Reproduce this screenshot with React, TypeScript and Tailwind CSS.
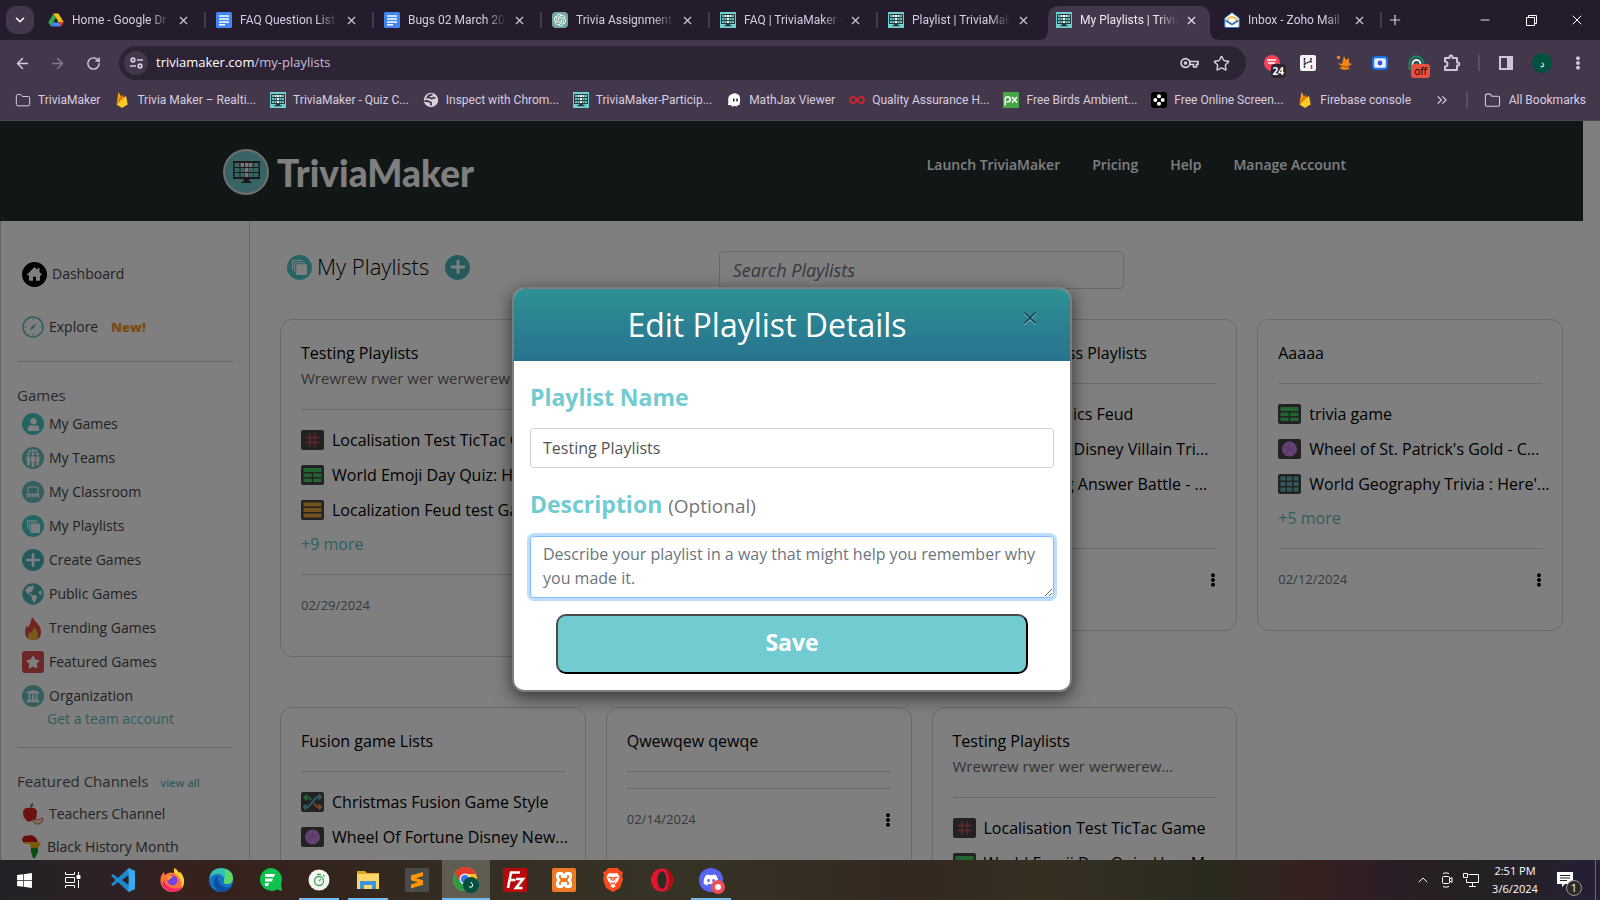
import React from 'react';
import {
  ArrowLeft, ArrowRight, RotateCw, X, Plus, Minus, ChevronDown, ChevronUp, ChevronsRight,
  Folder, Star,
} from 'lucide-react';
import { FaEllipsisV, FaUser, FaStar, FaUniversity, FaDiscord, FaWindows, FaGlobeAmericas } from 'react-icons/fa';
import { SiOpenai } from 'react-icons/si';

/* ---------- small logos ---------- */

const TriviaIcon = ({ size = 16 }: { size?: number }) => (
  <svg width={size} height={size} viewBox="0 0 16 16">
    <rect width="16" height="16" fill="#6fcfd0" />
    <rect x="1" y="2" width="14" height="10" fill="#2c3a3c" />
    <path d="M6 12h4v1h1.500v1.200h-7V13H6z" fill="#2c3a3c" />
    <path d="M2 3h2v2H2zM12 3h2v2h-2zM2 6h2v2H2zM4.500 6h2v2h-2zM9.500 6h2v2h-2zM12 6h2v2h-2zM2 9h2v2H2zM4.500 9h2v2h-2zM9.500 9h2v2h-2zM12 9h2v2h-2z" fill="#62c4c6" />
    <path d="M4.500 3h2v2h-2zM7 3h2v2H7zM9.500 3h2v2h-2zM7 6h2v2H7zM7 9h2v2H7z" fill="#eefcfc" />
  </svg>
);

const DriveIcon = () => (
  <svg width="16" height="16" viewBox="0 0 16 16">
    <path d="M5.500 1.500h5L8 6z" fill="#188038" />
    <path d="M5.500 1.500L8 6 3 14.500.3 10.200z" fill="#34a853" />
    <path d="M10.500 1.500l5.200 8.700h-5.300L5.500 1.500z" fill="#fbbc04" />
    <path d="M8 6l2.400 4.200h-5z" fill="#241b2d" />
    <path d="M5.400 10.200h5.200L13 14.500H3z" fill="#4285f4" />
    <path d="M10.400 10.200h5.300L13 14.500z" fill="#ea4335" />
  </svg>
);

const DocsIcon = () => (
  <svg width="16" height="16" viewBox="0 0 16 16">
    <rect width="16" height="16" rx="1.500" fill="#4285f4" />
    <path d="M3 3.200h10v1.600H3zM3 6.200h10v1.600H3zM3 9.200h10v1.600H3zM3 12h6v1.500H3z" fill="#fff" />
  </svg>
);

const GptIcon = () => (
  <span className="flex h-4 w-4 items-center justify-center rounded-sm bg-[#74aa9c] text-white">
    <SiOpenai size={12} />
  </span>
);

const ZohoIcon = () => (
  <svg width="16" height="16" viewBox="0 0 16 16">
    <path d="M.8 6L8 .6 15.200 6v8.300q0 1.200-1.200 1.200H2Q.8 15.500.8 14.300z" fill="#fff" stroke="#2e74c9" strokeWidth="1" />
    <path d="M3.500 7Q8 2.800 12.500 7v2L8 12 3.500 9z" fill="#fff" stroke="#f0a820" strokeWidth="1.400" />
    <path d="M1.500 8.500L8 12.500l6.500-4" fill="none" stroke="#2e74c9" strokeWidth="1.500" />
  </svg>
);

const FirebaseIcon = () => (
  <svg width="16" height="16" viewBox="0 0 16 16">
    <path d="M2.500 12.500L4.300.8q.2-.6.6 0L7 4.500z" fill="#ffa000" />
    <path d="M2.500 12.500L8.200 3q.3-.4.6 0l1.500 3z" fill="#f57c00" />
    <path d="M2.500 12.500l9-8.300q.6-.4.700.200l1.500 8.100-5 3q-.7.400-1.400 0z" fill="#ffca28" />
  </svg>
);

const GlobeIcon = () => (
  <svg width="16" height="16" viewBox="0 0 16 16">
    <circle cx="8" cy="8" r="7.200" fill="#d8d2dc" />
    <path d="M9.500 2.500Q5 3 4.500 5.500q2.500-.5 3.500 1 2 .5 2.500-1l2 .5M1.500 9h3q1.500 1 3.500 1.500v3" fill="none" stroke="#43384b" strokeWidth="1.800" />
  </svg>
);

const GhostIcon = () => (
  <svg width="14" height="14" viewBox="0 0 14 14">
    <path d="M3 2Q8-1.500 12 2q2 3 .5 10l-2 .3-1 1.500-2-1-2 1-1.500-1.600L1 12Q1.500 9 1.200 7 1 3.500 3 2z" fill="#fff" />
    <path d="M6.800 5.500v3M10 5.500v3" stroke="#222" strokeWidth="1.500" />
  </svg>
);

const InfinityIcon = () => (
  <svg width="16" height="16" viewBox="0 0 16 16" fill="none" stroke="#d8232f" strokeWidth="1.800">
    <path d="M8 8C6.500 5.500 5.500 4.800 4.200 4.800a3.200 3.200 0 000 6.400C5.500 11.200 6.500 10.500 8 8s2.500-3.200 3.800-3.200a3.200 3.200 0 010 6.400C10.500 11.200 9.500 10.500 8 8z" />
  </svg>
);

const PxIcon = () => (
  <svg width="16" height="16" viewBox="0 0 16 16">
    <rect width="16" height="16" fill="#47a447" />
    <g fill="none" stroke="#fff" strokeWidth="1.500">
      <path d="M2.200 13.500V7.300a2.500 2.500 0 112.500 2.500H3.500M9 5l5 5.500M14 5l-5 5.500" />
    </g>
  </svg>
);

const DotsIcon = () => (
  <svg width="16" height="16" viewBox="0 0 16 16">
    <rect width="16" height="16" rx="3" fill="#000" />
    <g fill="#fff">
      <circle cx="8" cy="4.300" r="2" /><circle cx="8" cy="11.700" r="2" />
      <circle cx="4.300" cy="8" r="2" /><circle cx="11.700" cy="8" r="2" />
    </g>
  </svg>
);

/* ---------- browser chrome ---------- */

const tabs = [
  { icon: <DriveIcon />, title: 'Home - Google Dr' },
  { icon: <DocsIcon />, title: 'FAQ Question List' },
  { icon: <DocsIcon />, title: 'Bugs 02 March 202' },
  { icon: <GptIcon />, title: 'Trivia Assignment (' },
  { icon: <TriviaIcon />, title: 'FAQ | TriviaMaker -' },
  { icon: <TriviaIcon />, title: 'Playlist | TriviaMak' },
  { icon: <TriviaIcon />, title: 'My Playlists | Trivia', active: true },
  { icon: <ZohoIcon />, title: 'Inbox - Zoho Mail' },
];

const bookmarks = [
  { icon: <Folder size={17} strokeWidth={1.500} />, title: 'TriviaMaker' },
  { icon: <FirebaseIcon />, title: 'Trivia Maker – Realti...' },
  { icon: <TriviaIcon />, title: 'TriviaMaker - Quiz C...' },
  { icon: <GlobeIcon />, title: 'Inspect with Chrom...' },
  { icon: <TriviaIcon />, title: 'TriviaMaker-Particip...' },
  { icon: <GhostIcon />, title: 'MathJax Viewer' },
  { icon: <InfinityIcon />, title: 'Quality Assurance H...' },
  { icon: <PxIcon />, title: 'Free Birds Ambient...' },
  { icon: <DotsIcon />, title: 'Free Online Screen...' },
  { icon: <FirebaseIcon />, title: 'Firebase console' },
];

function TabStrip() {
  return (
    <div className="flex h-10 items-stretch bg-[#241b2d] font-[Roboto] text-[#d8cde0]">
      <button aria-label="Search tabs" className="ml-[6px] mt-[6px] flex h-7 w-7 items-center justify-center rounded-[10px] bg-[#43384b] text-white">
        <ChevronDown size={14} strokeWidth={2.500} />
      </button>
      <div className="ml-[6px] flex">
        {tabs.map((tab, i) => (
          <div
            key={tab.title}
            className={`relative mt-[6px] mr-[6px] flex w-[162px] items-center pb-[6px] pl-2 ${tab.active ? 'rounded-t-[10px] bg-[#43384b] text-[#efe6f5]' : ''}`}
          >
            <span className="shrink-0">{tab.icon}</span>
            <span className="ml-2 w-[100px] overflow-hidden text-xs whitespace-nowrap [mask-image:linear-gradient(to_right,black_78px,transparent_98px)]">
              {tab.title}
            </span>
            <button aria-label="Close tab" className="ml-[5px]"><X size={13} strokeWidth={2} /></button>
            {!tab.active && i !== 5 && <span className="absolute top-[6px] -right-1 h-4 w-0.5 bg-[#453b4e]" />}
            {tab.active && (
              <>
                <svg className="absolute bottom-0 -left-[10px]" width="10" height="10"><path d="M10 0v10H0Q10 10 10 0z" fill="#43384b" /></svg>
                <svg className="absolute bottom-0 -right-[10px]" width="10" height="10"><path d="M0 0v10h10Q0 10 0 0z" fill="#43384b" /></svg>
              </>
            )}
          </div>
        ))}
      </div>
      <button aria-label="New tab" className="-ml-px p-1"><Plus size={16} strokeWidth={1.800} /></button>
      <div className="ml-auto flex text-white">
        <button aria-label="Minimize" className="flex w-[46px] items-center justify-center"><Minus size={14} strokeWidth={1.500} /></button>
        <button aria-label="Restore" className="flex w-[46px] items-center justify-center">
          <svg width="11" height="11" fill="none" stroke="currentColor"><path d="M.5 2.500h8v8h-8zM2.500 2.500v-2h8v8h-2" /></svg>
        </button>
        <button aria-label="Close" className="flex w-[46px] items-center justify-center"><X size={16} strokeWidth={1.500} /></button>
      </div>
    </div>
  );
}

function Extensions() {
  return (
    <div className="flex items-center text-[#d0c3da]">
      <button aria-label="Recorder" className="relative flex h-7 w-9 items-center justify-center">
        <svg width="16" height="16"><circle cx="8" cy="8" r="8" fill="#f5425d" /><path d="M3 5h9M4 8h7" stroke="#fff" strokeWidth="1.500" /></svg>
        <span className="absolute right-1 -bottom-px rounded-sm bg-[#2b2530] px-0.5 text-[10px] leading-[14px] font-bold text-white">24</span>
      </button>
      <button aria-label="Highlighter" className="flex w-9 justify-center">
        <svg width="16" height="16"><rect width="16" height="16" rx="2" fill="#f4f4f6" /><path d="M4.500 3v10M4.500 9L11 6M11 3v5" stroke="#222" strokeWidth="1.500" strokeDasharray="2 .6" fill="none" /><path d="M11.500 10v4" stroke="#e0245e" strokeWidth="1.500" /></svg>
      </button>
      <button aria-label="Fox" className="flex w-9 justify-center">
        <svg width="16" height="16" fill="#f08519"><circle cx="2.500" cy="2.500" r="1.800" /><path d="M8 1l2 4 3-2v5l3 1-4 3 2 2-6 1-5-2 3-1-4-4 4 1z" /><path d="M5 11l5 1 4-1" stroke="#a34c05" fill="none" /></svg>
      </button>
      <button aria-label="Capture" className="flex w-9 justify-center">
        <svg width="16" height="14"><rect x=".75" y=".75" width="14.500" height="12.500" rx="3" fill="#1a73e8" stroke="#1a73e8" strokeWidth="1.500" /><rect x="2.200" y="2.200" width="11.600" height="9.600" rx="1.500" fill="#e9f1ff" /><circle cx="8" cy="7" r="2.400" fill="#3b54d4" /></svg>
      </button>
      <button aria-label="Fingerprint" className="relative flex h-7 w-9 items-center justify-center">
        <svg width="17" height="16" fill="none" strokeWidth="1.800"><path d="M1.500 15V8.500a7 7 0 0114 0" stroke="#0f8a63" /><path d="M4.500 15V9a4 4 0 018 0" stroke="#e8fff6" /><path d="M7.500 15V9.500a1.200 1.200 0 012.400 0V14" stroke="#0f8a63" /></svg>
        <span className="absolute right-1 -bottom-px rounded-[3px] bg-[#e8503f] px-[3px] text-[10px] leading-[14px] text-black">off</span>
      </button>
      <button aria-label="Extensions" className="flex w-9 justify-center">
        <svg width="18" height="18" fill="none" stroke="currentColor" strokeWidth="2">
          <path d="M2 4h4.500V3a1.500 1.500 0 013 0v1H14v4.500h.8a1.500 1.500 0 010 3H14V16H2v-3.500a2.500 2.500 0 000-5z" strokeLinejoin="round" />
        </svg>
      </button>
      <span className="mx-2 h-4 w-0.5 bg-[#5b5063]" />
      <button aria-label="Side panel" className="flex w-9 justify-center">
        <svg width="14" height="14"><rect x="1" y="1" width="12" height="12" fill="none" stroke="currentColor" strokeWidth="2" /><path d="M8 1h5v12H8z" fill="currentColor" /></svg>
      </button>
      <button aria-label="Profile" className="mx-2 flex h-5 w-5 items-center justify-center rounded-full bg-[#00513f] text-[10px] leading-none text-white">د</button>
      <button aria-label="Menu" className="flex w-9 justify-center"><FaEllipsisV size={14} /></button>
    </div>
  );
}

function Toolbar() {
  return (
    <div className="flex h-[46px] items-center bg-[#43384b] pr-1 text-[#d8cde0]">
      <button aria-label="Back" className="ml-[14px]"><ArrowLeft size={17} strokeWidth={2} /></button>
      <button aria-label="Forward" className="ml-[18px] text-[#85798f]"><ArrowRight size={17} strokeWidth={2} /></button>
      <button aria-label="Reload" className="ml-5"><RotateCw size={15} strokeWidth={2.200} /></button>
      <div className="mr-2 ml-[18px] flex h-[34px] flex-1 items-center rounded-full bg-[#2c2334] pr-4 pl-[5px]">
        <button aria-label="Site information" className="flex h-6 w-6 items-center justify-center rounded-full bg-[#43384b]">
          <svg width="13" height="12" fill="none" stroke="currentColor" strokeWidth="1.700"><circle cx="3" cy="3" r="1.800" /><path d="M7 3h6M0 9h6" /><circle cx="10" cy="9" r="1.800" /></svg>
        </button>
        <p className="ml-2 flex-1 text-[13px] text-[#cbbcd6]"><span className="text-white">triviamaker.com</span>/my-playlists</p>
        <button aria-label="Passwords" className="mr-[14px]">
          <svg width="19" height="12" fill="none" stroke="currentColor" strokeWidth="1.700"><circle cx="5.500" cy="6" r="4.400" /><circle cx="5.500" cy="6" r="1" /><path d="M9.500 4.500H18v3h-1.500V10h-3V7.500h-4" /></svg>
        </button>
        <button aria-label="Bookmark this page"><Star size={17} strokeWidth={2} /></button>
      </div>
      <Extensions />
    </div>
  );
}

function BookmarksBar() {
  return (
    <div className="flex h-[34px] items-center bg-[#43384b] pb-[6px] pr-[14px] pl-2 font-[Roboto] text-xs text-[#d8cde0]">
      {bookmarks.map((b) => (
        <a key={b.title} href="#" className="flex items-center gap-[7px] px-[7px] whitespace-nowrap">
          <span className="flex w-4 shrink-0 justify-center">{b.icon}</span>
          {b.title}
        </a>
      ))}
      <button aria-label="More bookmarks" className="ml-auto"><ChevronsRight size={16} strokeWidth={1.800} /></button>
      <span className="mx-4 h-4 w-0.5 bg-[#5b5063]" />
      <a href="#" className="flex items-center gap-2 whitespace-nowrap"><Folder size={17} strokeWidth={1.500} />All Bookmarks</a>
    </div>
  );
}

/* ---------- sidebar ---------- */

const Disc = ({ children, className = 'bg-[#4bc9c9]' }: { children: React.ReactNode; className?: string }) => (
  <span className={`flex h-[22px] w-[22px] shrink-0 items-center justify-center overflow-hidden rounded-full text-white ${className}`}>{children}</span>
);

const HomeIcon = () => (
  <svg width="15" height="14" viewBox="0 0 15 14" fill="currentColor">
    <path d="M7.500 0l3 3V1h2v4L15 7.500 14 8.500h-1V13q0 .8-.8.800H9v-4H6v4H2.800Q2 13.800 2 13V8.500H1L0 7.500z" />
  </svg>
);

const StackIcon = ({ size = 14 }: { size?: number }) => (
  <svg width={size} height={size} viewBox="0 0 14 14" fill="none" stroke="currentColor">
    <path d="M.5 9V.5H10M2.500 11V2.500H12" />
    <rect x="4.500" y="4.500" width="9" height="9" fill="currentColor" />
  </svg>
);

const TeamIcon = () => (
  <svg width="16" height="18" viewBox="0 0 16 18" fill="currentColor">
    <circle cx="5" cy="2" r="1.300" /><circle cx="8" cy="1.500" r="1.300" /><circle cx="11" cy="2" r="1.300" />
    <circle cx="3.500" cy="5" r="1.500" /><circle cx="8" cy="4.800" r="1.600" /><circle cx="12.500" cy="5" r="1.500" />
    <path d="M1.500 7.500h3.800v5H4.800v4H2.200v-4H1.500zM6 7.200h4v5.500h-.6V18H6.600v-5.300H6zM10.700 7.500h3.800v5h-.7v4h-2.600v-4h-.5z" />
  </svg>
);

const BoardIcon = () => (
  <svg width="14" height="12" viewBox="0 0 14 12" fill="none" stroke="currentColor">
    <path d="M2 8V1h10v7" />
    <path d="M1 8.500h12M1.500 11.500V9M4.200 11.500V9M7 11.500V9M9.800 11.500V9M12.500 11.500V9" strokeWidth="1.500" />
  </svg>
);

const FlameIcon = () => (
  <svg width="22" height="23" viewBox="0 0 22 23">
    <path d="M10 0q2 3 5 6 4 4 4 9 0 5-3 7l-4 1H9q-6-2-6-8 0-4 2-7l1 3Q9 6 10 0z" fill="#e0483f" />
    <path d="M12 10q4 4 4 8 0 4-3 5H9q-3-1-3-4 0-3 2-4l1 1q2-3 3-6z" fill="#f0b43c" />
  </svg>
);

const AppleIcon = () => (
  <svg width="22" height="22" viewBox="0 0 22 22">
    <path d="M8 5Q2 4 1 9q0 6 4 9 2 1 4 0 6 1 6-9-1-5-7-4z" fill="#d8261f" />
    <path d="M8 5Q8 1 11 0q1 3-3 5z" fill="#3f8d2f" />
    <path d="M10 16q5 2 11-1 1 4-4 6-5 1-7-5z" fill="#f4e3b0" stroke="#c73a2c" strokeWidth=".7" />
  </svg>
);

const AfricaIcon = () => (
  <svg width="20" height="23" viewBox="0 0 20 23">
    <path d="M2 1l8-1 4 3 2 4H1L0 4z" fill="#d3171b" />
    <path d="M1 7h15l3 1-3 5H9L8 9 3 9z" fill="#f2b617" />
    <path d="M9 13h7v4l-3 6h-2l-2-6z" fill="#0e9a23" />
  </svg>
);

const games = [
  { icon: <Disc><FaUser size={13} /></Disc>, label: 'My Games' },
  { icon: <Disc className="bg-[#68bcc0]"><TeamIcon /></Disc>, label: 'My Teams' },
  { icon: <Disc className="bg-[#68bcc0]"><BoardIcon /></Disc>, label: 'My Classroom' },
  { icon: <Disc><StackIcon size={13} /></Disc>, label: 'My Playlists' },
  { icon: <Disc className="bg-[#4bb4b8]"><Plus size={20} strokeWidth={3} /></Disc>, label: 'Create Games' },
  { icon: <span className="rounded-full bg-white text-[#4bb4b8]"><FaGlobeAmericas size={22} /></span>, label: 'Public Games' },
  { icon: <FlameIcon />, label: 'Trending Games' },
  { icon: <span className="flex h-[22px] w-[22px] items-center justify-center rounded-[3px] bg-[#dc4e4e] text-white"><FaStar size={14} /></span>, label: 'Featured Games' },
  { icon: <Disc className="bg-[#68bcc0]"><FaUniversity size={14} /></Disc>, label: 'Organization' },
];

function Sidebar() {
  return (
    <aside className="w-[250px] shrink-0 border-x border-[#c8c8c8] px-4 text-sm text-[#444]">
      <a href="#" className="mt-10 ml-[5px] flex h-[26px] items-center gap-[5px]">
        <span className="flex h-[25px] w-[25px] items-center justify-center rounded-full bg-black text-white"><HomeIcon /></span>
        Dashboard
      </a>
      <a href="#" className="mt-[29px] ml-[5px] flex h-[22px] items-center gap-[5px]">
        <svg width="22" height="22" fill="none" stroke="#5fbcc0">
          <circle cx="11" cy="11" r="10" strokeWidth="1.500" />
          <path d="M11 2.500v2M11 17.500v2M2.500 11h2M17.500 11h2" />
          <path d="M14.500 7.500l-2.500 4.500-4.500 2.500L10 10z" fill="#5fbcc0" stroke="none" />
        </svg>
        Explore <span className="ml-2 text-[13px] font-extrabold text-[#f0962a]">New!</span>
      </a>
      <hr className="mt-[23px] border-[#ccc]" />
      <h2 className="mt-[21px] text-[15px] leading-6 text-[#555]">Games</h2>
      <nav>
        {games.map((g) => (
          <a key={g.label} href="#" className="ml-[5px] flex h-[34px] items-center gap-[5px]">{g.icon}{g.label}</a>
        ))}
      </nav>
      <a href="#" className="-mt-1 ml-[30px] block leading-5 font-medium text-[#5fbcc0]">Get a team account</a>
      <hr className="mt-[18px] border-[#ccc]" />
      <h2 className="mt-[21px] mb-0.5 text-[15px] leading-6 text-[#555]">
        Featured Channels <a href="#" className="ml-2 text-[11px] font-semibold text-[#5fbcc0]">view all</a>
      </h2>
      <a href="#" className="ml-[5px] flex h-[33px] items-center gap-[5px]"><AppleIcon />Teachers Channel</a>
      <a href="#" className="ml-[5px] flex h-[33px] items-center gap-[5px]"><AfricaIcon />Black History Month</a>
    </aside>
  );
}

/* ---------- playlists ---------- */

type GameKind = 'tictac' | 'trivia' | 'feud' | 'wheel' | 'grid' | 'fusion';

const GameIcon = ({ kind }: { kind: GameKind }) => (
  <svg className="shrink-0" width="23" height="20" viewBox="0 0 23 20">
    <rect width="23" height="20" rx="2" fill="#444" />
    {kind === 'tictac' && <path d="M9 3v14M14 3v14M5 7.500h13M5 12.500h13" stroke="#c65258" strokeWidth="1.400" />}
    {kind === 'trivia' && <path d="M2.500 3h18v4h-18zM2.500 8.500h8.200v3.500H2.500zM12.300 8.500h8.200v3.500h-8.200zM2.500 13.500h8.200V17H2.500zM12.300 13.500h8.200V17h-8.200z" fill="#45c864" />}
    {kind === 'feud' && <path d="M2.500 2.500h18v4h-18zM2.500 8h18v4h-18zM2.500 13.500h18v4h-18z" fill="#e8a23c" />}
    {kind === 'wheel' && (
      <g>
        <circle cx="11.500" cy="10" r="7.500" fill="#cc85ea" />
        <path d="M11.500 10V2.500M11.500 10l6.500-3.500M11.500 10l5 5.500M11.500 10l-5 5.500M11.500 10L5 6.500" stroke="#b374d2" strokeWidth="1.500" />
      </g>
    )}
    {kind === 'grid' && (
      <path d="M2.500 2.500h5v4h-5zM9 2.500h5v4H9zM15.500 2.500h5v4h-5zM2.500 8h5v4h-5zM9 8h5v4H9zM15.500 8h5v4h-5zM2.500 13.500h5v4h-5zM9 13.500h5v4H9zM15.500 13.500h5v4h-5z" fill="#5fb3b8" />
    )}
    {kind === 'fusion' && (
      <g fill="none" strokeWidth="2">
        <path d="M6 3L3.500 5.500 6 8M3.500 5.500H8l2 2.500" stroke="#45c864" />
        <path d="M3 15h4l9-10h4M17.500 2.500L20 5l-2.500 2.500M5.500 12.500L3 15l2.500 2.500" stroke="#5fb3c0" />
        <path d="M13 11l3 4h4M17.500 12.500L20 15l-2.500 2.500" stroke="#e0924a" />
      </g>
    )}
  </svg>
);

type Playlist = { title: string; description?: string; items: [GameKind, string][]; more?: number; date: string };

const playlists: Playlist[] = [
  {
    title: 'Testing Playlists',
    description: 'Wrewrew rwer wer werwerew dsd...',
    items: [['tictac', 'Localisation Test TicTac Game'], ['trivia', 'World Emoji Day Quiz: How M...'], ['feud', 'Localization Feud test Game']],
    more: 9,
    date: '02/29/2024',
  },
  { title: 'Playlist', items: [], date: '02/20/2024' },
  {
    title: 'Monday Business Playlists',
    items: [['feud', 'Marvel Comics Feud'], ['trivia', 'Some More Disney Villain Tri...'], ['grid', 'Big Morning Answer Battle - ...']],
    more: 3,
    date: '02/14/2024',
  },
  {
    title: 'Aaaaa',
    items: [['trivia', 'trivia game'], ['wheel', "Wheel of St. Patrick's Gold - C..."], ['grid', "World Geography Trivia : Here'..."]],
    more: 5,
    date: '02/12/2024',
  },
  {
    title: 'Fusion game Lists',
    items: [['fusion', 'Christmas Fusion Game Style'], ['wheel', 'Wheel Of Fortune Disney New...']],
    date: '02/14/2024',
  },
  { title: 'Qwewqew qewqe', items: [], date: '02/14/2024' },
  {
    title: 'Testing Playlists',
    description: 'Wrewrew rwer wer werwerew...',
    items: [['tictac', 'Localisation Test TicTac Game'], ['trivia', 'World Emoji Day Quiz: How M...']],
    date: '02/12/2024',
  },
];

function PlaylistCard({ playlist }: { playlist: Playlist }) {
  const { title, description, items, more, date } = playlist;
  return (
    <article className="rounded-xl border border-[#d4d4d4] px-5 pt-[21px] pb-10 text-base text-black">
      <h3 className="leading-6">{title}</h3>
      {description && <p className="h-[26px] truncate text-[15px] leading-[26px] text-[#666]">{description}</p>}
      <hr className="mt-[18px] border-[#d4d4d4]" />
      <ul className={items.length ? 'py-3' : 'h-4'}>
        {items.map(([kind, name]) => (
          <li key={name} className="flex h-[35px] items-center gap-2 whitespace-nowrap"><GameIcon kind={kind} />{name}</li>
        ))}
        {more && <li className="h-[35px] leading-[34px]"><a href="#" className="font-medium text-[#5fbcc0]">+{more} more</a></li>}
      </ul>
      <hr className="border-[#d4d4d4]" />
      <div className="mt-[21px] flex h-5 items-center justify-between text-[13px] text-[#6c757d]">
        {date}
        <button aria-label="Playlist options" className="-mr-1 text-black"><FaEllipsisV size={14} /></button>
      </div>
    </article>
  );
}

function Playlists() {
  return (
    <main className="min-w-0 flex-1 pt-[30px] pr-5 pl-[30px]">
      <div className="flex items-start">
        <div className="flex h-8 w-[34.2%] items-center pl-[7px]">
          <span className="flex h-[25px] w-[25px] items-center justify-center rounded-full bg-[#4bc9c9] text-white"><StackIcon size={15} /></span>
          <h1 className="ml-[5px] pb-0.5 text-[22px] font-light text-black">My Playlists</h1>
          <button aria-label="Add playlist" className="ml-4 flex h-[25px] w-[25px] items-center justify-center rounded-full bg-[#4bb4b8] text-white">
            <Plus size={20} strokeWidth={3.500} />
          </button>
        </div>
        <input
          aria-label="Search Playlists"
          placeholder="Search Playlists"
          className="h-[38px] w-[31.6%] rounded-sm border border-[#ced4da] px-[13px] text-lg italic placeholder:text-[#6c757d]"
        />
      </div>
      <div className="mt-[30px] grid grid-cols-4 items-start gap-x-5 gap-y-[50px]">
        {playlists.map((p, i) => <PlaylistCard key={i} playlist={p} />)}
      </div>
    </main>
  );
}

function SiteHeader() {
  return (
    <header className="flex h-[100px] items-start bg-[#222c2d] pl-[223px] text-white">
      <a href="#" className="mt-[27px] flex items-center gap-2">
        <span className="flex h-[46px] w-[46px] items-center justify-center rounded-full border-2 border-[#ddd] bg-[#72c9cd]">
          <svg width="27" height="22" viewBox="0 0 27 22">
            <path d="M0 0h27v18H16l1 3h2v1H8v-1h2l1-3H0z" fill="#333" />
            <path d="M1.500 2h5v4h-5zM20.500 2h5v4h-5zM1.500 7h5v4h-5zM7.500 7h4v4h-4zM16 7h4v4h-4zM20.500 7h5v4h-5zM1.500 12h5v4h-5zM7.500 12h4v4h-4zM16 12h4v4h-4zM20.500 12h5v4h-5z" fill="#72c9cd" />
            <path d="M7.500 2H11v4H7.500zM12 2h3.500v4H12zM16 2h3.500v4H16zM12 7h3.500v4H12zM12 12h3.500v4H12z" fill="#eee" />
          </svg>
        </span>
        <span className="pt-0.5 font-[Lato] text-[37px] leading-[46px] font-black">TriviaMaker</span>
      </a>
      <nav className="mt-8 mr-[237px] ml-auto flex gap-8 text-sm leading-6 font-semibold">
        <a href="#">Launch TriviaMaker</a>
        <a href="#">Pricing</a>
        <a href="#">Help</a>
        <a href="#">Manage Account</a>
      </nav>
    </header>
  );
}

function EditModal() {
  return (
    <div role="dialog" aria-label="Edit Playlist Details" className="w-[560px] overflow-hidden rounded-xl border-2 border-[#7c7c7c] bg-white shadow-[0_5px_18px_rgba(0,0,0,0.6)]">
      <div className="flex h-[72px] items-start bg-linear-to-b from-[#2f9193] to-[#27728f]">
        <h2 className="flex-1 pt-[11px] pl-[44px] text-center text-[32px] leading-[50px] font-medium text-white">Edit Playlist Details</h2>
        <button aria-label="Close" className="mt-[19px] mr-[30px] ml-[44px] text-[#173f46] drop-shadow-[0_1px_0_#9cc]"><X size={20} strokeWidth={2} /></button>
      </div>
      <form className="px-4 pb-4">
        <label htmlFor="name" className="block pt-5 text-[23px] leading-8 font-bold text-[#72cbd0]">Playlist Name</label>
        <input id="name" defaultValue="Testing Playlists" className="mt-[15px] h-10 w-full rounded-sm border border-[#ced4da] px-3 text-base text-[#555]" />
        <label htmlFor="description" className="mt-5 block text-[23px] leading-8 font-bold text-[#72cbd0]">
          Description <span className="text-[19px] font-medium text-[#777]">(Optional)</span>
        </label>
        <textarea
          id="description"
          rows={2}
          placeholder="Describe your playlist in a way that might help you remember why you made it."
          className="mt-[14px] block h-[62px] w-full rounded-sm border border-[#80bdff] px-3 py-[5px] text-base outline-none ring-3 ring-[#bfdeff] placeholder:text-[#6c757d]"
        />
        <button type="button" className="mx-auto mt-4 block h-[60px] w-[90%] rounded-[10px] border-2 border-t-[#4a4a4a] border-r-black border-b-black border-l-[#4a4a4a] bg-[#72cbd0] pb-1 text-[23px] font-bold text-white">
          Save
        </button>
      </form>
    </div>
  );
}

/* ---------- taskbar ---------- */

const taskbarApps = [
  { name: 'VS Code', icon: <svg width="24" height="24"><path d="M17.500 0L24 3v18l-6.500 3L7 14l-5 4-2-1.500L4.500 12 0 7.500 2 6l5 4z" fill="#1f8ad2" /><path d="M17.500 0L24 3v18l-6.500 3z" fill="#3ba7ee" /><path d="M17.500 7v10L11 12z" fill="#2b211f" /></svg> },
  { name: 'Firefox', icon: <svg width="24" height="24"><path d="M12 24A11.500 11.500 0 01.5 12Q.5 7 4 4l1 3 3-2q3-1 6 0V0q3 1 5 5l1-1q4 4 4 9 0 11-12 11z" fill="#ff7139" /><path d="M14 0q3 1 5 5l1-1q4 4 4 9 0 4-2 7Q22 9 14 5z" fill="#ffcf3a" /><path d="M2 16q3 8 11 8 6 0 9-5-5 3-10 1-7-2-8-8z" fill="#f5256b" /><circle cx="12.500" cy="12.500" r="5" fill="#7542e5" /><path d="M7 8q4-1 6 1-3 1-5 4z" fill="#ff9a2e" /></svg> },
  { name: 'Edge', icon: <svg width="24" height="24"><circle cx="12" cy="12" r="12" fill="#1473c4" /><path d="M0 11Q2 0 12 0q11 0 12 10 0 6-6 6-5 0-3-4 1-5-6-6-6 0-9 5z" fill="#35c1b4" /><path d="M15 1q9 2 9 10-1 5-6 5-4 0-3-3 3-7 0-12z" fill="#62d66a" /><path d="M9 8q-5 2-4 9 2 6 8 7 6 0 9-5-5 2-9-1-5-4-4-10z" fill="#0c4f9e" /></svg> },
  { name: 'Forms', icon: <svg width="24" height="24"><path d="M12 0a11.500 11.500 0 0111 16l1 7-5-1.500A11.500 11.500 0 1112 0z" fill="#10c04e" /><path d="M7 6h10l-1 3H7zM7 10.500h8l-1 3H7zM7 15h4l-1 3H7z" fill="#fff" /></svg> },
  { name: 'Clock', open: true, icon: <svg width="22" height="22"><circle cx="11" cy="11" r="10.500" fill="#f4f6f4" /><circle cx="11" cy="12" r="4.500" fill="none" stroke="#45a856" strokeWidth="1.300" /><path d="M11 12l2-2M9 5.500h4M15 6l1.500 1.500" stroke="#45a856" strokeWidth="1.300" /></svg> },
  { name: 'Explorer', open: true, icon: <svg width="24" height="20"><path d="M1 1h8l2 2h12v6H1z" fill="#e0a51b" /><path d="M1 4h22v15H1z" fill="#fcd667" /><path d="M4 19v-8h16v8h-4v-4H8v4z" fill="#3d94dc" /></svg> },
  { name: 'Sublime', icon: <svg width="24" height="24"><rect width="24" height="24" rx="2" fill="#4a4a4a" /><path d="M6 7.500L18 4v4l-7 2.300 7 2v4.500L6 20.500v-4l7-2.200-7-2z" fill="#ff9800" /></svg> },
  { name: 'Chrome', current: true, icon: (
    <svg width="26" height="26">
      <circle cx="12" cy="12" r="12" fill="#fbc116" />
      <path d="M12 12L1.600 6A12 12 0 0012 24l5-9z" fill="#2a9c48" />
      <path d="M1.600 6L7 14.500 12 7h10.900a12 12 0 00-21.300-1z" fill="#e33b2e" />
      <circle cx="12" cy="12" r="5.500" fill="#fff" /><circle cx="12" cy="12" r="4.300" fill="#3a78e8" />
      <circle cx="18" cy="18" r="8" fill="#04503f" />
      <path d="M18 15q3 3 1 5h-3" stroke="#fff" fill="none" />
    </svg>
  ) },
  { name: 'FileZilla', icon: <svg width="24" height="24"><rect width="24" height="24" fill="#b80a0a" /><path d="M5 20L8 4.500h9M6.500 12h6M13 11h7l-7 9h6.500" stroke="#fff" strokeWidth="2.600" fill="none" /></svg> },
  { name: 'XAMPP', icon: (
    <svg width="24" height="24">
      <rect width="24" height="24" rx="2" fill="#f07a24" />
      <path d="M7 4h3l2 2 2-2h3q3 0 3 3v2q0 2-1.500 3 1.500 1 1.500 3v2q0 3-3 3h-3l-2-2-2 2H7q-3 0-3-3v-2q0-2 1.500-3Q4 11 4 9V7q0-3 3-3z" fill="#fff" />
      <path d="M7 7.500q2-1 2 .500v2h6V8q0-1.500 2-.5v2L15.500 12l1.500 2.500v2q-2 1-2-.5v-2H9v2q0 1.500-2 .5v-2L8.500 12 7 9.500z" fill="#f07a24" />
    </svg>
  ) },
  { name: 'Brave', icon: <svg width="22" height="24"><path d="M6 0h10l2 3 3 1-1 4 1 3-3 9-7 4-7-4L1 11l1-3-1-4 3-1z" fill="#fb4a1e" /><path d="M7 5l4 .5L15 5l2.500 3.500-1.500 4.500-5 5-5-5-1.500-4.500z" fill="#fff" /><path d="M6.500 9l3 .8-.5 2.700M15.500 9l-3 .8.500 2.700M11 9v4M9 14.500l2 1.200 2-1.200" stroke="#fb4a1e" fill="none" strokeWidth="1.200" /><path d="M8 18l3-1.500 3 1.500-3 2z" fill="#fff" /></svg> },
  { name: 'Opera', icon: <svg width="22" height="24"><ellipse cx="11" cy="12" rx="11" ry="11.500" fill="#e3142c" /><path d="M15 1.500a11 11.500 0 010 21q3-4 3-10.500t-3-10.500z" fill="#a30c1c" /><ellipse cx="11" cy="12" rx="4.500" ry="9" fill="#2e2b22" /></svg> },
  { name: 'Discord', open: true, icon: (
    <span className="relative flex h-6 w-6 items-center justify-center rounded-full bg-[#5865f2] text-white">
      <FaDiscord size={16} />
      <span className="absolute -right-0.5 -bottom-0.5 flex h-[14px] w-[14px] items-center justify-center rounded-full bg-[#ee4c56]"><span className="h-[6px] w-[6px] rounded-full bg-white" /></span>
    </span>
  ) },
];

function Taskbar() {
  return (
    <footer className="flex h-10 shrink-0 bg-[linear-gradient(90deg,#222226,#2c2126_6%,#36211c_12%,#33241c_20%,#352c22_28%,#363326_42%,#34281f_57%,#352f22_65%,#2b2a1e_76%,#36201f_82%,#2b1e27_87%,#23211f_92%,#271f36)] text-white">
      <button aria-label="Start" className="flex w-12 items-center justify-center"><FaWindows size={17} /></button>
      <button aria-label="Task view" className="mr-[3px] flex w-12 items-center justify-center">
        <svg width="17" height="16" fill="none" stroke="currentColor"><path d="M1.500 0v2.500h9V0M1.500 5.500h9v5h-9zM1.500 16v-2.500h9V16M14.500 0v3M14.500 8v8" /><path d="M13 3.500h3v3h-3z" fill="currentColor" /></svg>
      </button>
      {taskbarApps.map((app) => (
        <button
          key={app.name}
          aria-label={app.name}
          className={`relative mr-px flex w-12 items-center justify-center ${app.current ? 'border-b-2 border-[#76b9ed] bg-[#5f5c52] pt-0.5' : ''}`}
        >
          {app.icon}
          {app.open && <span className="absolute inset-x-1 bottom-0 h-0.5 bg-[#76b9ed]" />}
        </button>
      ))}
      <div className="ml-auto flex items-center">
        <button aria-label="Hidden icons" className="flex w-6 justify-center"><ChevronUp size={16} strokeWidth={1.500} /></button>
        <button aria-label="Meet now" className="flex w-6 justify-center">
          <svg width="12" height="16" fill="none" stroke="currentColor"><rect x="1.500" y="4.500" width="7" height="7" rx="1" /><path d="M8.500 7l2.500-1.500v5L8.500 9M2 1.500q3-1.500 6 0M2 14.500q3 1.500 6 0" /></svg>
        </button>
        <button aria-label="Network" className="flex w-6 justify-center">
          <svg width="16" height="14" fill="none" stroke="currentColor"><path d="M5.500 1.500h10v8h-12V6M9.500 9.500v4M6 13.500h7M.5.500h4v4h-4z" /></svg>
        </button>
        <p className="w-16 text-center text-[11px] leading-[18px] whitespace-nowrap">2:51 PM<br />3/6/2024</p>
        <button aria-label="Notifications" className="relative mr-[22px] ml-[10px]">
          <svg width="16" height="16" fill="#fff"><path d="M0 0h16v12H8l-3 3v-3H0z" /><path d="M3 3.500h10M3 6h10M3 8.500h7" stroke="#222" /></svg>
          <span className="absolute -right-[9px] -bottom-[8px] flex h-4 w-4 items-center justify-center rounded-full border border-[#999] bg-[#2a2a2a] text-[11px]">1</span>
        </button>
        <span className="mr-1 h-10 w-px bg-[#6a6672]" />
      </div>
    </footer>
  );
}

export default function App() {
  return (
    <div className="flex h-screen flex-col overflow-hidden font-['Open_Sans',sans-serif]">
      <TabStrip />
      <Toolbar />
      <BookmarksBar />
      <div className="relative flex min-h-0 flex-1 border-t border-[#4f4558] bg-white">
        <div className="h-full min-w-0 flex-1 overflow-hidden">
          <SiteHeader />
          <div className="flex">
            <Sidebar />
            <Playlists />
          </div>
        </div>
        <div className="w-[17px] shrink-0 bg-[#fdfdfd]" />
        <div className="absolute inset-0 flex items-start justify-center bg-black/50 pt-[166px] pr-4">
          <EditModal />
        </div>
      </div>
      <Taskbar />
    </div>
  );
}
